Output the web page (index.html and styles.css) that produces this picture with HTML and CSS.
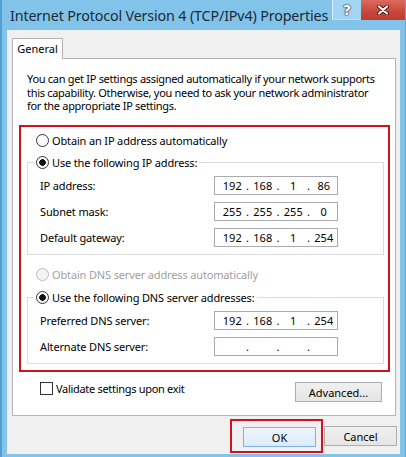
FILE: index.html
```html
<!DOCTYPE html>
<html lang="en">
<head>
    <meta charset="UTF-8">
    <meta name="viewport" content="width=device-width, initial-scale=1.0">
    <title>Internet Protocol Version 4 (TCP/IPv4) Properties</title>
    <link rel="stylesheet" href="styles.css">
</head>
<body>

    <div class="window">
        <!-- Barra de título -->
        <div class="titlebar">
            <span class="title">Internet Protocol Version 4 (TCP/IPv4) Properties</span>
            <div class="caption-buttons">
                <button class="cap help">?</button>
                <button class="cap close">
                    <svg width="12" height="10" viewBox="0 0 12 10">
                        <path d="M2 1.5 L10 8.5 M10 1.5 L2 8.5" stroke="#4a1410" stroke-width="4" stroke-linecap="round"/>
                        <path d="M2 1.5 L10 8.5 M10 1.5 L2 8.5" stroke="#fff" stroke-width="2.2" stroke-linecap="round"/>
                    </svg>
                </button>
            </div>
        </div>

        <div class="client">
            <div class="tabs">
                <span class="tab">General</span>
            </div>

            <div class="panel">
                <p class="intro">You can get IP settings assigned automatically if your network supports this capability. Otherwise, you need to ask your network administrator for the appropriate IP settings.</p>

                <div class="highlight">
                    <label class="radio-line top-radio"><input type="radio" name="ip"> Obtain an IP address automatically</label>

                    <fieldset class="group">
                        <legend><label class="radio-line"><input type="radio" name="ip" checked> Use the following IP address:</label></legend>
                        <div class="field">
                            <span class="field-label">IP address:</span>
                            <div class="ipbox"><span>192</span><i>.</i><span>168</span><i>.</i><span>1</span><i>.</i><span>86</span></div>
                        </div>
                        <div class="field">
                            <span class="field-label">Subnet mask:</span>
                            <div class="ipbox"><span>255</span><i>.</i><span>255</span><i>.</i><span>255</span><i>.</i><span>0</span></div>
                        </div>
                        <div class="field">
                            <span class="field-label">Default gateway:</span>
                            <div class="ipbox"><span>192</span><i>.</i><span>168</span><i>.</i><span>1</span><i>.</i><span>254</span></div>
                        </div>
                    </fieldset>

                    <label class="radio-line top-radio dns-auto disabled"><input type="radio" name="dns" disabled> Obtain DNS server address automatically</label>

                    <fieldset class="group dns-group">
                        <legend><label class="radio-line"><input type="radio" name="dns" checked> Use the following DNS server addresses:</label></legend>
                        <div class="field">
                            <span class="field-label">Preferred DNS server:</span>
                            <div class="ipbox"><span>192</span><i>.</i><span>168</span><i>.</i><span>1</span><i>.</i><span>254</span></div>
                        </div>
                        <div class="field">
                            <span class="field-label">Alternate DNS server:</span>
                            <div class="ipbox"><span></span><i>.</i><span></span><i>.</i><span></span><i>.</i><span></span></div>
                        </div>
                    </fieldset>
                </div>

                <div class="panel-footer">
                    <label class="check"><input type="checkbox"> Validate settings upon exit</label>
                    <button class="btn advanced">Advanced...</button>
                </div>
            </div>

            <!-- Botões do diálogo -->
            <div class="dialog-buttons">
                <div class="focus-mark">
                    <button class="btn default">OK</button>
                </div>
                <button class="btn">Cancel</button>
            </div>
        </div>
    </div>

</body>
</html>
```

FILE: styles.css
```css
* {
    box-sizing: border-box;
}

body {
    margin: 0;
    font-family: "Noto Sans", "Open Sans", sans-serif;
    font-size: 11px;
    color: #000;
    background-color: #82c4e9;
}

.window {
    height: 457px;
    display: flex;
    flex-direction: column;
    box-shadow: inset 2px 0 #4f9fd2, inset -1px 0 #5aa8d8;
}

.titlebar {
    height: 30px;
    display: flex;
    align-items: flex-start;
}

.title {
    margin: 6px 0 0 10px;
    font-size: 14.3px;
    line-height: 20px;
    color: #1b2a37;
    letter-spacing: -0.15px;
}

.caption-buttons {
    margin-left: auto;
    margin-right: 1px;
    display: flex;
}

.cap {
    height: 20px;
    padding: 0;
    border: none;
    color: white;
    font-family: "DejaVu Sans", sans-serif;
    font-weight: bold;
    cursor: default;
    display: flex;
    align-items: center;
    justify-content: center;
}

.help {
    width: 29px;
    font-size: 14px;
    background-color: #a2d5f1;
    border-left: 1px solid #d9f0fb;
    border-bottom: 1px solid #b9e1f6;
    text-shadow: 0 0 1px #1d3b52, 0 0 1px #1d3b52, 0 0 2px #1d3b52;
}

.close {
    width: 44px;
    background: linear-gradient(#dc6a60, #c7463b 60%, #bf3a2f);
}

.client {
    flex: 1;
    margin: 0 6px 3px 7px;
    padding: 8px 3px 0 5px;
    background-color: #f0f0f0;
    display: flex;
    flex-direction: column;
}

.tabs {
    display: flex;
    height: 20px;
}

.tab {
    position: relative;
    z-index: 1;
    width: 51px;
    height: 21px;
    border: 1px solid #b4b4b4;
    border-bottom: none;
    background-color: white;
    text-align: center;
    line-height: 20px;
}

.panel {
    margin-right: 1px;
    padding: 13px 5px 13px 6px;
    background-color: white;
    border: 1px solid #b4b4b4;
}

.intro {
    margin: 0 8px;
    line-height: 13.5px;
    letter-spacing: -0.3px;
}

.highlight {
    margin-top: 12.5px;
    padding: 5px 4px 6px 6px;
    border: 2px solid #d0121d;
}

.radio-line {
    display: flex;
    align-items: center;
    height: 16px;
    letter-spacing: -0.15px;
}

.top-radio {
    margin-left: 9px;
}

.radio-line input,
.check input {
    appearance: none;
    margin: 0 3px 0 0;
    width: 13px;
    height: 13px;
    border: 1px solid #333;
    background-color: white;
}

.radio-line input {
    border-radius: 50%;
}

.radio-line input:checked {
    background: radial-gradient(circle, #111 0, #111 3px, white 3.6px);
}

.disabled {
    color: #a0a0a0;
}

.disabled input {
    border-color: #bcbcbc;
    background-color: #f4f4f4;
}

.group {
    margin: 6px 0 0 0;
    padding: 6px 0 7px 0;
    border: 1px solid #dcdcdc;
}

.group legend {
    margin-left: 6px;
    padding: 0 2px;
}

.field {
    display: flex;
    align-items: center;
    height: 19px;
    padding: 0 45px 0 12px;
}

.field + .field {
    margin-top: 7px;
}

.field-label {
    flex: 1;
    letter-spacing: -0.15px;
}

.ipbox {
    width: 124px;
    height: 19px;
    padding-left: 4px;
    border: 1px solid #a9abb0;
    display: flex;
    align-items: center;
}

.ipbox span {
    width: 26.5px;
    text-align: center;
}

.ipbox i {
    width: 4px;
    font-style: normal;
    text-align: center;
}

.dns-auto {
    margin-top: 11px;
}

.dns-group {
    margin-top: 7px;
}

.panel-footer {
    margin-top: 10px;
    display: flex;
    align-items: flex-start;
}

.check {
    display: flex;
    align-items: center;
    height: 13px;
    margin-left: 21px;
    letter-spacing: -0.3px;
}

.btn {
    height: 20px;
    padding: 0;
    font-family: "Noto Sans", "Open Sans", sans-serif;
    font-size: 11px;
    color: #000;
    border: 1px solid #adadad;
    background: linear-gradient(#f0f0f0, #e5e5e5);
    cursor: pointer;
}

.advanced {
    width: 87px;
    margin-left: auto;
    margin-right: 8px;
}

.dialog-buttons {
    margin-top: 3px;
    display: flex;
    justify-content: flex-end;
    align-items: center;
}

.dialog-buttons .btn {
    width: 73px;
}

.focus-mark {
    padding: 6px 5px 4px 11px;
    border: 2px solid #d0121d;
    margin-right: 1px;
}

.btn.default {
    display: block;
    border-color: #7eb4ea;
    background: linear-gradient(#ecf4fc, #dcecfc);
}
```
